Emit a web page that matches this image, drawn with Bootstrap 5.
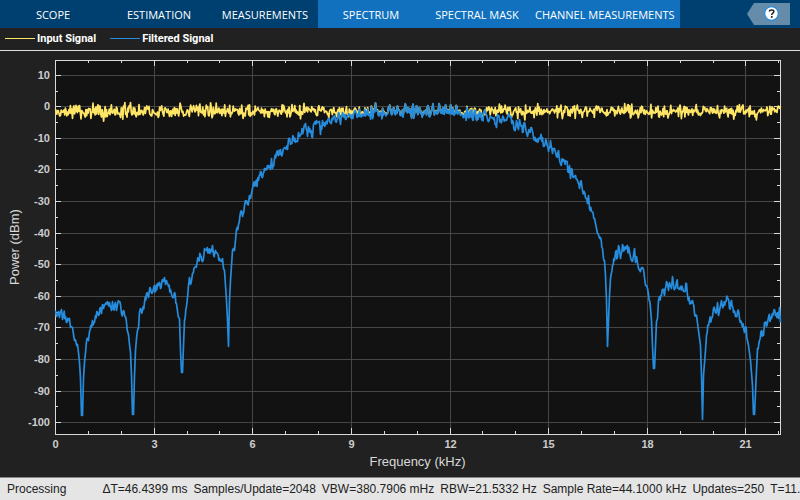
<!DOCTYPE html>
<html lang="en">
<head>
<meta charset="utf-8">
<meta name="viewport" content="width=device-width, initial-scale=1">
<title>Spectrum Analyzer</title>
<link rel="stylesheet" href="https://cdn.jsdelivr.net/npm/bootstrap@5.3.0/dist/css/bootstrap.min.css">
<style>
body { background: #212121; font-family: "Liberation Sans", Arial, sans-serif; }
.toolstrip { background: #004070; height: 28px; }
.tool-tab { min-width: 106px; padding: 2px 5px 0; font: 11px/26px "Open Sans", sans-serif; color: #fff; background: transparent; border: 0; white-space: nowrap; }
.tool-tab.contextual { background: #1171be; }
.help-btn { width: 43px; height: 22px; line-height: 0; margin-right: 10px; }
.legend-bar { height: 23px; padding: 0 5px 2px; border-bottom: 1px solid #e0e0e0; color: #fff; font: 700 11px Roboto, sans-serif; gap: 14px; }
.swatch { width: 30px; height: 1px; margin: 1px 2px 0 0; }
.swatch-input { background: #ffe566; }
.swatch-filtered { background: #268cdd; }
.plot-area { min-height: 0; overflow: hidden; }
.plot-area svg { display: block; width: 100%; height: 100%; }
.tick-label { font-size: 11px; font-weight: 700; fill: #ccc; }
.axis-title { font-size: 13px; fill: #d9d9d9; }
.trace { fill: none; stroke-width: 1.7px; stroke-linejoin: round; }
.status-bar { height: 23px; border-top: 1px solid #8a8484; background: #e5e5e5; color: #212121; font-size: 12px; padding-left: 7px; gap: 36px; white-space: nowrap; }
.readouts { gap: 6px; }
</style>
<script src="https://cdn.jsdelivr.net/npm/bootstrap@5.3.0/dist/js/bootstrap.bundle.min.js"></script>
</head>
<body class="d-flex flex-column vh-100 overflow-hidden">
<header class="toolstrip d-flex align-items-center flex-shrink-0">
  <div class="d-flex h-100" role="tablist">
    <button type="button" role="tab" class="tool-tab">SCOPE</button>
    <button type="button" role="tab" class="tool-tab">ESTIMATION</button>
    <button type="button" role="tab" class="tool-tab">MEASUREMENTS</button>
    <button type="button" role="tab" class="tool-tab contextual">SPECTRUM</button>
    <button type="button" role="tab" class="tool-tab contextual">SPECTRAL MASK</button>
    <button type="button" role="tab" class="tool-tab contextual">CHANNEL MEASUREMENTS</button>
  </div>
  <button type="button" class="help-btn btn p-0 border-0 ms-auto" aria-label="Help">
    <svg width="43" height="22" viewBox="0 0 43 22" aria-hidden="true">
      <path d="M0 11 7 0H43V22H7Z" fill="#668cab"/>
      <circle cx="24.5" cy="10.5" r="6.8" fill="#fff" stroke="#268cdd" stroke-width="1.2"/>
      <path d="M22.3 8.6C22.3 6.3 26.9 6.3 26.9 8.6C26.9 10.2 24.7 10.2 24.7 12" fill="none" stroke="#212121" stroke-width="1.5"/>
      <rect x="23.9" y="13" width="1.7" height="1.8" fill="#212121"/>
    </svg>
  </button>
</header>

<div class="legend-bar d-flex align-items-center flex-shrink-0">
  <div class="d-flex align-items-center"><span class="swatch swatch-input"></span>Input Signal</div>
  <div class="d-flex align-items-center"><span class="swatch swatch-filtered"></span>Filtered Signal</div>
</div>

<main class="plot-area flex-grow-1">
  <svg id="plot" role="img" aria-label="Power spectrum of the input and filtered signals"></svg>
</main>

<footer class="status-bar d-flex align-items-center flex-shrink-0 overflow-hidden">
  <span>Processing</span>
  <div class="readouts d-flex">
    <span>ΔT=46.4399 ms</span>
    <span>Samples/Update=2048</span>
    <span>VBW=380.7906 mHz</span>
    <span>RBW=21.5332 Hz</span>
    <span>Sample Rate=44.1000 kHz</span>
    <span>Updates=250</span>
    <span>T=11.</span>
  </div>
</footer>

<script>
// Filtered trace: position and level on a 0..800 by 0..500 grid, lower skirt and upper skirt.
const lower = "55,310 56,316 58,311 59,317 61,309 62,319 63,314 65,316 66,322 68,320 69,318 70,327 72,327 73,334 74,340 77,344 78,352 79,362 80,378 81,415 82,415 83,378 84,362 85,352 86,341 88,340 89,331 91,327 92,320 94,322 95,315 97,312 98,315 100,307 101,313 102,304 103,308 104,304 107,301 109,302 111,310 112,301 113,309 115,302 116,310 117,304 120,304 121,313 124,314 126,322 128,334 129,344 130,352 131,375 132,414 133,414 134,375 135,350 136,338 138,328 139,312 140,308 142,310 144,302 146,293 148,297 150,288 152,292 153,288 155,291 157,283 159,282 160,288 162,279 164,277 165,284 166,280 168,286 170,289 173,297 174,292 176,303 178,317 179,318 180,350 181,372 182,372 183,345 184,320 186,306 187,297 188,285 189,277 190,284 192,273 195,266 198,259 200,255 202,261 204,248 206,250 208,252 210,249 211,251 212,245 213,254 215,250 217,253 219,258 221,261 222,258 223,268 224,270 225,285 226,300 227,320 228,346 229,300 230,280 231,265 232,250 233,248 234,250 236,229 238,224 240,212 242,216 244,205 245,200 247,204 249,195 250,198 253,183 255,184 258,180 260,171 262,177 264,168 267,165 270,169 271,158 272,168 274,158 276,152 278,155 280,149 282,153 284,147 287,149 288,139 290,144 293,137 297,141 298,132 300,134 303,130 305,123 307,136 308,126 310,132 312,137 313,124 316,120 319,121 320,134 322,120 325,123 328,118 330,122 333,116 335,121 338,112 340,124 342,112 345,119 348,113 351,118";
const upper = "483,112 485,113 488,121 490,116 493,119 496,127 497,114 500,119 503,117 506,120 509,116 512,120 514,130 516,120 518,129 519,119 522,132 524,122 527,136 529,131 531,127 533,137 536,141 539,138 542,137 543,146 546,141 548,151 550,140 552,153 554,148 556,156 558,150 560,163 563,159 566,161 568,172 569,165 570,178 571,168 573,177 575,175 577,180 579,188 580,181 582,190 585,197 587,203 588,195 589,208 591,211 594,218 597,233 600,237 602,248 604,260 605,275 606,300 607,346 608,320 609,295 610,278 612,265 614,260 615,252 617,257 618,245 620,258 622,244 624,248 626,246 629,251 631,260 633,255 634,248 635,262 636,256 639,269 642,267 643,269 645,285 647,288 648,294 650,308 651,320 652,345 653,368 654,368 655,345 656,321 657,318 658,300 659,296 661,295 663,289 664,295 666,281 668,290 669,282 671,288 672,276 673,284 675,288 676,281 678,288 680,286 684,291 686,283 687,295 690,303 692,300 694,313 696,315 698,330 700,345 701,375 702,419 703,375 705,350 706,335 708,325 709,320 711,318 713,308 715,312 717,302 718,315 721,300 723,305 725,301 727,298 729,308 731,300 733,312 735,316 737,311 739,318 741,322 744,332 745,326 747,340 748,345 750,360 752,385 753,414 754,414 756,370 757,348 759,340 761,330 763,335 764,322 766,326 768,317 771,318 773,312 775,315 777,312 778,318 779,307 780,322";
const parse = s => s.split(" ").map(p => p.split(",").map(Number));

let seed = 7;
function rnd() { seed = (seed * 16807) % 2147483647; return seed / 2147483647; }

const input = [];
for (let i = 0; i <= 1024; i++) {
  const n = (rnd() + rnd() + rnd() - 1.5) * 6.4;
  input.push([55 + i * 725 / 1024, 110.6 + n + (rnd() > .98 ? 4 : 0)]);
}
// Adds fine noise between vertices, about one sample for each frequency bin.
function roughen(points) {
  const out = [];
  points.forEach((p, i) => {
    out.push(p);
    const q = points[i + 1];
    if (!q) return;
    const steps = Math.round((q[0] - p[0]) * 1.41);
    const steep = Math.abs(q[1] - p[1]) > 14;
    for (let k = 1; k < steps && !steep; k++) {
      out.push([p[0] + (q[0] - p[0]) * k / steps,
                p[1] + (q[1] - p[1]) * k / steps + (rnd() - .5) * 8]);
    }
  });
  return out;
}
const passband = input.filter(p => p[0] > 351 && p[0] < 483)
  .map(p => [p[0], 111 + (p[1] - 110.6) * 1.15 + Math.pow(Math.abs(p[0] - 417) / 66, 3) * 3]);
const filtered = [...roughen(parse(lower)), ...passband, ...roughen(parse(upper))];

const svg = document.getElementById("plot");
function draw() {
  const w = svg.clientWidth, h = svg.clientHeight;
  const L = 55, T = 9, R = w - 20, B = h - 43;
  const kx = (R - L) / 725, ky = (B - T) / 374;
  const X = f => Math.floor(L + (.6 + 32.87 * f) * kx);
  const Y = d => Math.floor(T + (15.24 + 3.158 * (10 - d)) * ky);
  const path = pts => "M" + pts.map(p =>
    (L + .5 + (p[0] - 55) * kx).toFixed(1) + " " + (T + .5 + (p[1] - 60) * ky).toFixed(1)).join("L");
  let grid = "", ticks = "", labels = "";
  for (let f = 0; f <= 22; f++) {
    const x = X(f) + .5, major = f % 3 === 0, n = major ? 6 : 3;
    if (f) ticks += `M${x} ${T}v${n}M${x} ${B}v${-n}`;
    if (major) {
      if (f) grid += `M${x} ${T}V${B}`;
      labels += `<text class="tick-label" text-anchor="middle" x="${x}" y="${B + 14}">${f}</text>`;
    }
  }
  for (let d = 10; d >= -100; d -= 5) {
    const y = Y(d) + .5, major = d % 10 === 0, n = major ? 6 : 3;
    ticks += `M${L} ${y}h${n}M${R} ${y}h${-n}`;
    if (major) {
      grid += `M${L} ${y}H${R}`;
      labels += `<text class="tick-label" text-anchor="end" x="${L - 5}" y="${y + 3.5}">${d}</text>`;
    }
  }
  svg.innerHTML = `
    <rect x="${L}" y="${T}" width="${R - L}" height="${B - T}" fill="#121212"/>
    <path d="${grid}" stroke="#464646"/>
    <rect x="${L + .5}" y="${T + .5}" width="${R - L}" height="${B - T}" fill="none" stroke="#d9d9d9"/>
    <path d="${ticks}" stroke="#d9d9d9"/>
    <path class="trace" d="${path(input)}" stroke="#ffe566"/>
    <path class="trace" d="${path(filtered)}" stroke="#268cdd"/>
    ${labels}
    <text class="axis-title" text-anchor="middle" x="${(L + R) / 2}" y="${B + 32}">Frequency (kHz)</text>
    <text class="axis-title" text-anchor="middle" transform="translate(19 ${(T + B) / 2}) rotate(-90)">Power (dBm)</text>`;
}
draw();
window.addEventListener("resize", draw);
</script>
</body>
</html>
